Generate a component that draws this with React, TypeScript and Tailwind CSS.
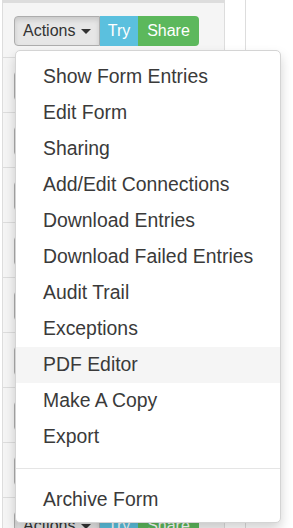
const MENU_ITEMS = [
  "Show Form Entries",
  "Edit Form",
  "Sharing",
  "Add/Edit Connections",
  "Download Entries",
  "Download Failed Entries",
  "Audit Trail",
  "Exceptions",
  "PDF Editor",
  "Make A Copy",
  "Export",
];

const ROWS = [0, 1, 2, 3, 4, 5, 6, 7, 8, 9];

function ButtonGroup() {
  return (
    <div className="flex h-[30px] text-[16px] leading-none">
      {/* ACTIONS */}
      <div className="flex items-center gap-[6px] h-full w-[86px] pl-[8px] bg-[#e6e6e6] border border-[#adadad] rounded-l-[4px] text-[#333] shadow-[inset_0_3px_5px_rgba(0,0,0,0.125)]">
        <span>Actions</span>
        <span className="w-0 h-0 border-x-[5px] border-x-transparent border-t-[5px] border-t-[#333]" />
      </div>
      {/* TRY */}
      <div className="flex items-center justify-center h-full w-[38px] bg-[#5bc0de] text-white">
        Try
      </div>
      {/* SHARE */}
      <div className="flex items-center justify-center h-full w-[61px] bg-[#5cb85c] text-white rounded-r-[4px]">
        Share
      </div>
    </div>
  );
}

export default function App() {
  return (
    <div
      className="relative w-[293px] h-[528px] overflow-hidden bg-white"
      style={{ fontFamily: '"Liberation Sans", Arial, sans-serif' }}
    >
      {/* TABLE BEHIND */}
      <div className="flex">
        <div className="w-[2px]" />
        <div className="w-[223px] border-l border-r border-[#dddddd] bg-[#f5f5f5]">
          <div className="h-[3px] bg-[#dddddd]" />
          {ROWS.map((r) => (
            <div
              key={r}
              className="h-[55px] pt-[13px] pl-[11px] border-b border-[#dddddd]"
            >
              <ButtonGroup />
            </div>
          ))}
        </div>
        <div className="w-[21px] border-r border-[#dddddd]" />
      </div>

      {/* DROPDOWN */}
      <div className="absolute left-[15px] top-[50px] w-[266px] bg-white border border-[#d4d4d4] rounded-[5px] pt-[8px] pb-[4px] shadow-[0_6px_12px_rgba(0,0,0,0.175)] text-[19.4px] text-[#3a3a3a]">
        {MENU_ITEMS.map((item) => (
          <div
            key={item}
            className={`h-[36px] flex items-center pl-[27px] ${
              item === "PDF Editor" ? "bg-[#f5f5f5]" : ""
            }`}
          >
            {item}
          </div>
        ))}
        <div className="my-[13px] h-px bg-[#e5e5e5]" />
        <div className="h-[36px] flex items-center pl-[27px]">Archive Form</div>
      </div>
    </div>
  );
}
